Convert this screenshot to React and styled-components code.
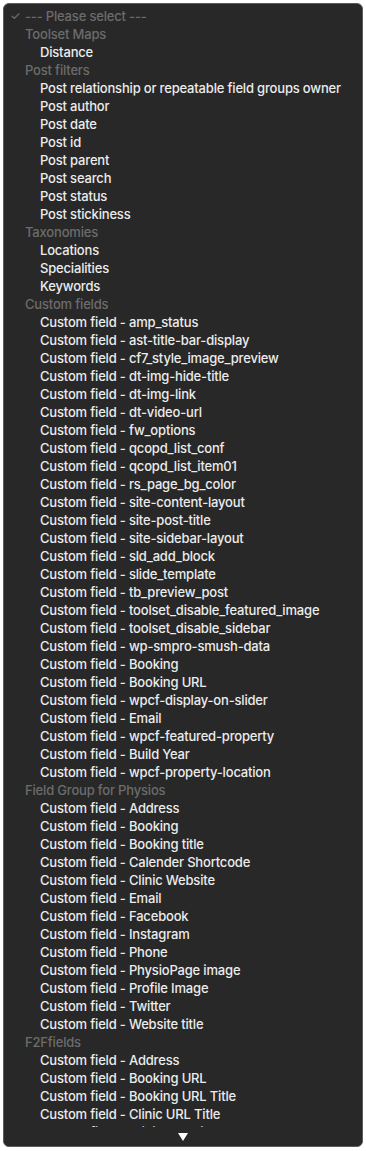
import React from 'react';
import styled, { createGlobalStyle } from 'styled-components';

const Global = createGlobalStyle`
html, body { margin: 0; padding: 0; background: #ffffff; }
body { font-family: Inter, "Noto Sans", "Liberation Sans", sans-serif; }
`

const groups = [
    { label: 'Toolset Maps', items: ['Distance'] },
    {
        label: 'Post filters', items: [
            'Post relationship or repeatable field groups owner', 'Post author', 'Post date', 'Post id',
            'Post parent', 'Post search', 'Post status', 'Post stickiness',
        ]
    },
    { label: 'Taxonomies', items: ['Locations', 'Specialities', 'Keywords'] },
    {
        label: 'Custom fields', items: [
            'amp_status', 'ast-title-bar-display', 'cf7_style_image_preview', 'dt-img-hide-title', 'dt-img-link',
            'dt-video-url', 'fw_options', 'qcopd_list_conf', 'qcopd_list_item01', 'rs_page_bg_color',
            'site-content-layout', 'site-post-title', 'site-sidebar-layout', 'sld_add_block', 'slide_template',
            'tb_preview_post', 'toolset_disable_featured_image', 'toolset_disable_sidebar', 'wp-smpro-smush-data',
            'Booking', 'Booking URL', 'wpcf-display-on-slider', 'Email', 'wpcf-featured-property', 'Build Year',
            'wpcf-property-location',
        ].map((f) => 'Custom field - ' + f)
    },
    {
        label: 'Field Group for Physios', items: [
            'Address', 'Booking', 'Booking title', 'Calender Shortcode', 'Clinic Website', 'Email', 'Facebook',
            'Instagram', 'Phone', 'PhysioPage image', 'Profile Image', 'Twitter', 'Website title',
        ].map((f) => 'Custom field - ' + f)
    },
    {
        label: 'F2Ffields', items: [
            'Address', 'Booking URL', 'Booking URL Title', 'Clinic URL Title', 'Clinic Website',
        ].map((f) => 'Custom field - ' + f)
    },
];

export default function App() {
    return (
        <Page>
            <Global />
            <Menu>
                <List>
                    <Row $muted>
                        <Check>✓</Check>
                        --- Please select ---
                    </Row>
                    {groups.map((g) => (
                        <React.Fragment key={g.label}>
                            <Row $muted>{g.label}</Row>
                            {g.items.map((it, i) => (
                                <Row key={i} $indent>{it}</Row>
                            ))}
                        </React.Fragment>
                    ))}
                </List>
                <Footer>
                    <svg width="10" height="8" viewBox="0 0 10 8">
                        <path d="M0 0 L10 0 L5 8 Z" fill="#ffffff" />
                    </svg>
                </Footer>
            </Menu>
        </Page>
    );
}

const Page = styled.div`
padding: 3px;
width: 360px;
`
const Menu = styled.div`
width: 360px;
height: 1144px;
box-sizing: border-box;
background: #282828;
border: 1px solid #5c5c5c;
border-radius: 6px;
display: flex;
flex-direction: column;
overflow: hidden;
`
const List = styled.div`
flex: 1;
min-height: 0;
overflow: hidden;
padding-top: 3px;
`
const Row = styled.div`
position: relative;
height: 18px;
line-height: 18px;
font-size: 13px;
font-weight: 500;
letter-spacing: -0.18px;
white-space: nowrap;
color: ${(p) => (p.$muted ? '#6c6c6c' : '#ececec')};
padding-left: ${(p) => (p.$indent ? '36px' : '21px')};
`
const Check = styled.span`
position: absolute;
left: 6px;
top: 0;
font-size: 12px;
color: #6c6c6c;
`
const Footer = styled.div`
height: 19px;
flex-shrink: 0;
display: flex;
justify-content: center;
align-items: flex-start;
padding-top: 6px;
box-sizing: border-box;
background: #282828;
`
